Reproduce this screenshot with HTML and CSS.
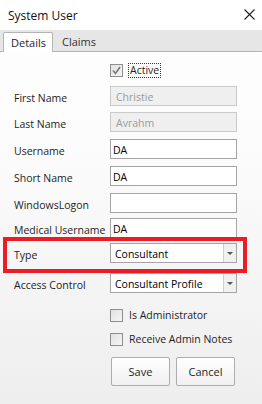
FILE: index.html
```html
<!DOCTYPE html>
<html lang="en">
<head>
    <meta charset="UTF-8">
    <title>System User</title>
    <link rel="stylesheet" href="styles.css">
</head>
<body>
    <div class="titlebar">
        <span class="title">System User</span>
        <svg class="close" width="11" height="11" viewBox="0 0 11 11">
            <path d="M0.5 0.5 L10.5 10.5 M10.5 0.5 L0.5 10.5" stroke="#222" stroke-width="1.1" fill="none"/>
        </svg>
    </div>
    <div class="tabs">
        <div class="tab active-tab">Details</div>
        <div class="tab">Claims</div>
    </div>
    <div class="form">
        <div class="row row-active">
            <span></span>
            <label class="check">
                <span class="box checked">
                    <svg width="9" height="9" viewBox="0 0 9 9"><path d="M1 4.5 L3.5 7.5 L8 1" stroke="#7a7a7a" stroke-width="1.6" fill="none"/></svg>
                </span>
                <span class="focus">Active</span>
            </label>
        </div>
        <div class="row h26">
            <span class="label">First Name</span>
            <div class="field disabled">Christie</div>
        </div>
        <div class="row h27">
            <span class="label">Last Name</span>
            <div class="field disabled">Avrahm</div>
        </div>
        <div class="row h27">
            <span class="label">Username</span>
            <div class="field">DA</div>
        </div>
        <div class="row h27">
            <span class="label">Short Name</span>
            <div class="field">DA</div>
        </div>
        <div class="row h25">
            <span class="label">WindowsLogon</span>
            <div class="field"></div>
        </div>
        <div class="row h25">
            <span class="label">Medical Username</span>
            <div class="field">DA</div>
        </div>
        <div class="row row-type">
            <span class="label">Type</span>
            <div class="field select">Consultant<span class="arrow"></span></div>
        </div>
        <div class="row h36">
            <span class="label">Access Control</span>
            <div class="field select">Consultant Profile<span class="arrow"></span></div>
        </div>
        <div class="row h24">
            <span></span>
            <label class="check"><span class="box"></span>Is Administrator</label>
        </div>
        <div class="row h24">
            <span></span>
            <label class="check"><span class="box"></span>Receive Admin Notes</label>
        </div>
        <div class="row">
            <span></span>
            <div class="buttons">
                <button>Save</button>
                <button>Cancel</button>
            </div>
        </div>
    </div>
</body>
</html>
```

FILE: styles.css
```css
body {
    margin: 0;
    width: 262px;
    height: 404px;
    font-family: "Open Sans", "Noto Sans", sans-serif;
    font-size: 10.5px;
    color: #1e1e1e;
    background: linear-gradient(to bottom, #ffffff 0%, #fbfbfb 40%, #eeeeee 100%);
    overflow: hidden;
}
.titlebar {
    height: 30px;
    display: flex;
    align-items: center;
    justify-content: space-between;
    padding: 0 7px 0 8px;
    background: #ffffff;
}
.title {
    font-size: 12px;
    color: #111;
}
.close {
    margin-top: -1px;
}
.tabs {
    height: 20px;
    padding: 1px 0 0 3px;
    display: flex;
    align-items: flex-end;
    background: #e6e6e6;
    border-bottom: 1px solid #b4b4b4;
}
.tab {
    height: 19px;
    line-height: 19px;
    padding: 0 8px 0 9px;
    color: #333;
    font-size: 11px;
}
.active-tab {
    width: 33px;
    background: #ffffff;
    border: 1px solid #b4b4b4;
    border-bottom: none;
    border-radius: 2px 2px 0 0;
    margin-bottom: -1px;
    padding: 0 8px 0 7px;
    color: #1e1e1e;
}
.form {
    width: 223px;
    padding: 12px 0 0 14px;
    display: flex;
    flex-direction: column;
}
.row {
    display: grid;
    grid-template-columns: 96px 127px;
    align-items: start;
    box-sizing: border-box;
}
.row-active { height: 22px; }
.h24 { height: 24px; }
.h25 { height: 25px; }
.h26 { height: 26px; }
.h27 { height: 27px; }
.h36 { height: 36px; }
.label {
    padding-top: 2px;
    line-height: 20px;
    white-space: nowrap;
}
.field {
    height: 20px;
    box-sizing: border-box;
    border: 1px solid #a5a5a5;
    background: #ffffff;
    padding: 2px 2px 0;
    line-height: 16px;
    color: #000;
    position: relative;
}
.field.disabled {
    background: #efefef;
    border-color: #cacaca;
    color: #9a9a9a;
    padding-left: 5px;
}
.row-type {
    margin: -6px -10px 0 -11px;
    border: 4px solid #ec1c24;
    padding: 2px 6px 4px 7px;
    position: relative;
}
.select {
    padding-left: 4px;
}
.arrow {
    position: absolute;
    top: 0;
    right: 0;
    width: 12px;
    height: 18px;
    background: #f1f1f1;
    border-left: 1px solid #d0d0d0;
}
.arrow::after {
    content: "";
    position: absolute;
    left: 3px;
    top: 8px;
    border-left: 3px solid transparent;
    border-right: 3px solid transparent;
    border-top: 3px solid #555;
}
.check {
    display: flex;
    align-items: center;
    gap: 6px;
    height: 13px;
    line-height: 13px;
    white-space: nowrap;
}
.box {
    width: 13px;
    height: 13px;
    box-sizing: border-box;
    border: 1px solid #8f8f8f;
    background: linear-gradient(135deg, #e2e2e2, #f4f4f4);
    display: flex;
    align-items: center;
    justify-content: center;
    flex-shrink: 0;
}
.focus {
    border: 1px dotted #333;
    padding: 0 1px;
    line-height: 13px;
    margin-left: -1px;
}
.buttons {
    display: flex;
    gap: 6px;
    padding-left: 1px;
}
.buttons button {
    width: 59px;
    height: 29px;
    font-family: inherit;
    font-size: 11px;
    color: #1e1e1e;
    border: 1px solid #adadad;
    border-radius: 2px;
    background: linear-gradient(to bottom, #ffffff, #f0f0f0);
}
```
